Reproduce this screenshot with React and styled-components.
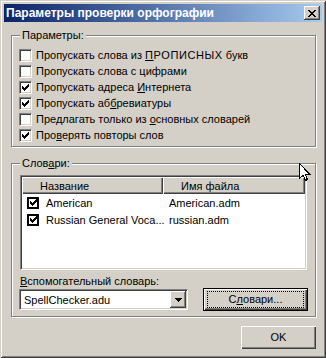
import React from 'react';
import styled, { createGlobalStyle } from 'styled-components';

const Global = createGlobalStyle`
  html, body { margin: 0; padding: 0; background: #D4D0C8; }
  body { font-family: "Liberation Sans", Arial, sans-serif; font-size: 11px; }
`;

const FONT = `"Liberation Sans", Arial, sans-serif`;

const Window = styled.div`
  position: relative;
  width: 326px;
  height: 358px;
  box-sizing: border-box;
  padding: 4px;
  background: #D4D0C8;
  box-shadow: inset 1px 1px 0 #D4D0C8, inset -1px -1px 0 #404040,
    inset 2px 2px 0 #ffffff, inset -2px -2px 0 #808080;
  display: flex;
  flex-direction: column;
  font-family: ${FONT};
  font-size: 11px;
  color: #000;
`;

const TitleBar = styled.div`
  height: 18px;
  padding: 0 2px;
  background: linear-gradient(to right, #0A246A, #A6CAF0);
  display: flex;
  align-items: center;
  justify-content: space-between;
`;

const TitleText = styled.span`
  color: #fff;
  font-weight: bold;
  font-size: 12px;
  line-height: 14px;
  white-space: nowrap;
`;

const CloseButton = styled.div`
  width: 16px;
  height: 14px;
  box-sizing: border-box;
  background: #D4D0C8;
  box-shadow: inset -1px -1px 0 #404040, inset 1px 1px 0 #ffffff, inset -2px -2px 0 #808080;
  display: flex;
  align-items: center;
  justify-content: center;
`;

const Body = styled.div`
  display: flex;
  flex-direction: column;
  width: 305px;
  padding: 13px 0 0 7px;
`;

const GroupBox = styled.div`
  position: relative;
  box-sizing: border-box;
  width: 305px;
  height: ${p => p.$h}px;
  margin-top: ${p => p.$mt || 0}px;
  padding: ${p => p.$pad};
  border: 1px solid #808080;
  box-shadow: inset 1px 1px 0 #ffffff, 1px 1px 0 #ffffff;
  display: flex;
  flex-direction: column;
`;

const Legend = styled.span`
  position: absolute;
  top: -7px;
  left: 8px;
  padding: 0 2px;
  background: #D4D0C8;
  line-height: 13px;
  white-space: nowrap;
`;

const CheckRow = styled.div`
  display: flex;
  align-items: flex-start;
  height: 16px;
  gap: 4px;
`;

const CheckLabel = styled.span`
  line-height: 13px;
  white-space: nowrap;
`;

const Caps = styled.span`
  letter-spacing: 0.6px;
`;

const Box3D = styled.span`
  position: relative;
  flex: none;
  width: 13px;
  height: 13px;
  box-sizing: border-box;
  background: #fff;
  border: 1px solid;
  border-color: #808080 #ffffff #ffffff #808080;
  box-shadow: inset 1px 1px 0 #404040, inset -1px -1px 0 #D4D0C8;
  display: flex;
  align-items: center;
  justify-content: center;
`;

const FlatBox = styled.span`
  flex: none;
  width: 12px;
  height: 12px;
  box-sizing: border-box;
  background: #fff;
  border: 2px solid #000;
  display: flex;
  align-items: center;
  justify-content: center;
`;

const U = styled.span`
  text-decoration: underline;
  text-underline-offset: 1px;
`;

const ListView = styled.div`
  box-sizing: border-box;
  width: 287px;
  height: 95px;
  padding: 1px;
  background: #fff;
  border: 1px solid;
  border-color: #808080 #ffffff #ffffff #808080;
  box-shadow: inset 1px 1px 0 #404040, inset -1px -1px 0 #D4D0C8;
  display: flex;
  flex-direction: column;
`;

const Columns = styled.div`
  display: grid;
  grid-template-columns: 141px 142px;
`;

const HeaderCell = styled.div`
  height: 17px;
  box-sizing: border-box;
  padding-left: 18px;
  background: #D4D0C8;
  box-shadow: inset 1px 1px 0 #ffffff, inset -1px -1px 0 #404040, inset -2px -2px 0 #808080;
  display: flex;
  align-items: center;
  white-space: nowrap;
`;

const Cell = styled.div`
  height: 17px;
  padding-left: ${p => p.$pl}px;
  display: flex;
  align-items: center;
  gap: 7px;
  white-space: nowrap;
`;

const FieldLabel = styled.div`
  margin-top: 5px;
  line-height: 13px;
`;

const ControlRow = styled.div`
  display: flex;
  align-items: center;
  height: 23px;
`;

const Combo = styled.div`
  box-sizing: border-box;
  width: 169px;
  height: 21px;
  margin-left: -1px;
  background: #fff;
  border: 1px solid;
  border-color: #808080 #ffffff #ffffff #808080;
  box-shadow: inset 1px 1px 0 #404040, inset -1px -1px 0 #D4D0C8;
  padding: 1px;
  display: flex;
  align-items: stretch;
`;

const ComboText = styled.div`
  flex: 1;
  padding-left: 3px;
  display: flex;
  align-items: center;
`;

const DropButton = styled.div`
  width: 16px;
  box-sizing: border-box;
  background: #D4D0C8;
  box-shadow: inset -1px -1px 0 #404040, inset 1px 1px 0 #ffffff, inset -2px -2px 0 #808080;
  display: flex;
  align-items: center;
  justify-content: center;
`;

const PushButton = styled.div`
  position: relative;
  box-sizing: border-box;
  width: ${p => p.$w}px;
  height: 23px;
  margin-left: ${p => p.$ml || 0}px;
  background: #D4D0C8;
  border: ${p => (p.$default ? '1px solid #000' : 'none')};
  box-shadow: inset 1px 1px 0 #ffffff, inset -1px -1px 0 #404040, inset -2px -2px 0 #808080;
  display: flex;
  align-items: center;
  justify-content: center;
  line-height: 13px;
  ${p =>
    p.$focus &&
    `&::after {
      content: '';
      position: absolute;
      left: 3px; right: 3px; top: 2px; bottom: 2px;
      border: 1px dotted #000;
    }`}
`;

const Footer = styled.div`
  display: flex;
  justify-content: flex-end;
  margin-top: 9px;
`;

const Cursor = styled.svg`
  position: absolute;
  left: 299px;
  top: 163px;
`;

const CheckMark = () => (
  <svg width="7" height="7" viewBox="0 0 7 7" shapeRendering="crispEdges">
    {[2, 3, 4, 3, 2, 1, 0].map((y, x) => (
      <rect key={x} x={x} y={y} width="1" height="3" fill="#000" />
    ))}
  </svg>
);

const CheckBox = ({ checked }) => <Box3D>{checked && <CheckMark />}</Box3D>;

const options = [
  { checked: false, label: <>Пропускать слова из <Caps><U>П</U>РОПИСНЫХ</Caps> букв</> },
  { checked: false, label: <>Пропускать слова с цифрами</> },
  { checked: true, label: <>Пропускать адреса <U>И</U>нтернета</> },
  { checked: true, label: <>Пропускать аб<U>б</U>ревиатуры</> },
  { checked: false, label: <>Предлагать только из <U>о</U>сновных словарей</> },
  { checked: true, label: <>Про<U>в</U>ерять повторы слов</> },
];

const dictionaries = [
  { name: 'American', file: 'American.adm' },
  { name: 'Russian General Voca...', file: 'russian.adm' },
];

export default function App() {
  return (
    <>
      <Global />
      <Window>
        <TitleBar>
          <TitleText>Параметры проверки орфографии</TitleText>
          <CloseButton>
            <svg width="8" height="7" viewBox="0 0 8 7" shapeRendering="crispEdges">
              {[0, 1, 2, 3, 4, 5, 6].map(i => (
                <React.Fragment key={i}>
                  <rect x={i} y={i} width="2" height="1" fill="#000" />
                  <rect x={6 - i} y={i} width="2" height="1" fill="#000" />
                </React.Fragment>
              ))}
            </svg>
          </CloseButton>
        </TitleBar>
        <Body>
          <GroupBox $h={112} $pad="13px 0 0 7px">
            <Legend>Параметры:</Legend>
            {options.map((o, i) => (
              <CheckRow key={i}>
                <CheckBox checked={o.checked} />
                <CheckLabel>{o.label}</CheckLabel>
              </CheckRow>
            ))}
          </GroupBox>
          <GroupBox $h={154} $mt={16} $pad="11px 0 0 8px">
            <Legend>
              Слов<U>а</U>ри:
            </Legend>
            <ListView>
              <Columns>
                <HeaderCell>Название</HeaderCell>
                <HeaderCell>Имя файла</HeaderCell>
              </Columns>
              {dictionaries.map(d => (
                <Columns key={d.file}>
                  <Cell $pl={5}>
                    <FlatBox>
                      <CheckMark />
                    </FlatBox>
                    {d.name}
                  </Cell>
                  <Cell $pl={6}>{d.file}</Cell>
                </Columns>
              ))}
            </ListView>
            <FieldLabel>
              <U>В</U>спомогательный словарь:
            </FieldLabel>
            <ControlRow>
              <Combo>
                <ComboText>SpellChecker.adu</ComboText>
                <DropButton>
                  <svg width="7" height="4" viewBox="0 0 7 4" shapeRendering="crispEdges">
                    <path d="M0 0H7V1H6V2H5V3H4V4H3V3H2V2H1V1H0Z" fill="#000" />
                  </svg>
                </DropButton>
              </Combo>
              <PushButton $w={105} $ml={15} $default $focus>
                <span>
                  С<U>л</U>овари...
                </span>
              </PushButton>
            </ControlRow>
          </GroupBox>
          <Footer>
            <PushButton $w={75}>OK</PushButton>
          </Footer>
        </Body>
        <Cursor width="12" height="19" viewBox="0 0 12 19">
          <path
            d="M0.5 0.5 L0.5 15.5 L4 12 L6.5 17.5 L8.5 16.5 L6 11 L10.5 11 Z"
            fill="#fff"
            stroke="#000"
            strokeWidth="1"
            shapeRendering="crispEdges"
          />
        </Cursor>
      </Window>
    </>
  );
}
